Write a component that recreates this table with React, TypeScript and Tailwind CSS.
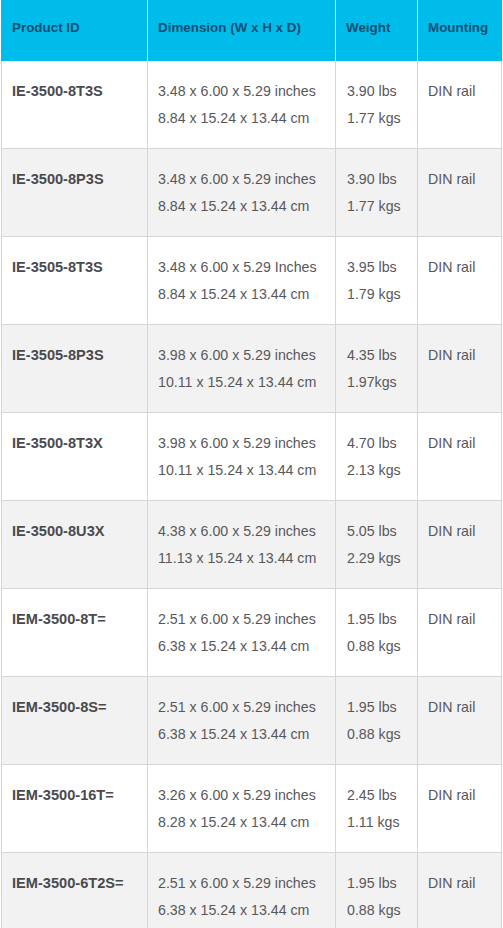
const rows = [
  { id: 'IE-3500-8T3S', dim: ['3.48 x 6.00 x 5.29 inches', '8.84 x 15.24 x 13.44 cm'], weight: ['3.90 lbs', '1.77 kgs'] },
  { id: 'IE-3500-8P3S', dim: ['3.48 x 6.00 x 5.29 inches', '8.84 x 15.24 x 13.44 cm'], weight: ['3.90 lbs', '1.77 kgs'] },
  { id: 'IE-3505-8T3S', dim: ['3.48 x 6.00 x 5.29 Inches', '8.84 x 15.24 x 13.44 cm'], weight: ['3.95 lbs', '1.79 kgs'] },
  { id: 'IE-3505-8P3S', dim: ['3.98 x 6.00 x 5.29 inches', '10.11 x 15.24 x 13.44 cm'], weight: ['4.35 lbs', '1.97kgs'] },
  { id: 'IE-3500-8T3X', dim: ['3.98 x 6.00 x 5.29 inches', '10.11 x 15.24 x 13.44 cm'], weight: ['4.70 lbs', '2.13 kgs'] },
  { id: 'IE-3500-8U3X', dim: ['4.38 x 6.00 x 5.29 inches', '11.13 x 15.24 x 13.44 cm'], weight: ['5.05 lbs', '2.29 kgs'] },
  { id: 'IEM-3500-8T=', dim: ['2.51 x 6.00 x 5.29 inches', '6.38 x 15.24 x 13.44 cm'], weight: ['1.95 lbs', '0.88 kgs'] },
  { id: 'IEM-3500-8S=', dim: ['2.51 x 6.00 x 5.29 inches', '6.38 x 15.24 x 13.44 cm'], weight: ['1.95 lbs', '0.88 kgs'] },
  { id: 'IEM-3500-16T=', dim: ['3.26 x 6.00 x 5.29 inches', '8.28 x 15.24 x 13.44 cm'], weight: ['2.45 lbs', '1.11 kgs'] },
  { id: 'IEM-3500-6T2S=', dim: ['2.51 x 6.00 x 5.29 inches', '6.38 x 15.24 x 13.44 cm'], weight: ['1.95 lbs', '0.88 kgs'] },
]

const headers = ['Product ID', 'Dimension (W x H x D)', 'Weight', 'Mounting']

export default function App() {
  return (
    <div className="min-h-screen bg-white font-['Liberation_Sans',Arial,sans-serif]">
      <div className="ml-[1px] w-[501px]">
        {/* 헤더 */}
        <div className="grid grid-cols-[146px_188px_82px_85px] h-[61px] bg-[#00bceb]">
          {headers.map((h, i) => (
            <div
              key={h}
              className={`pl-[10px] pt-[19px] text-[13.4px] leading-[18px] font-bold text-[#0d4f72] ${i > 0 ? 'border-l border-white' : 'pl-[11px]'}`}
            >
              {h}
            </div>
          ))}
        </div>

        {/* 본문 행 */}
        {rows.map((r, idx) => (
          <div
            key={r.id}
            className={`grid grid-cols-[145px_188px_82px_85px] h-[88px] border-l border-b border-[#d6d6d6] text-[14.2px] leading-[27px] text-[#58585b] ${idx % 2 === 1 ? 'bg-[#f2f2f2]' : 'bg-white'}`}
          >
            <div className="px-[10px] pt-[17px] text-[14.6px] font-bold text-[#4a4a4d]">{r.id}</div>
            <div className="border-l border-[#d6d6d6] px-[10px] pt-[17px]">
              <div>{r.dim[0]}</div>
              <div>{r.dim[1]}</div>
            </div>
            <div className="border-l border-[#d6d6d6] px-[11px] pt-[17px]">
              <div>{r.weight[0]}</div>
              <div>{r.weight[1]}</div>
            </div>
            <div className="border-l border-r border-[#d6d6d6] px-[10px] pt-[17px]">DIN rail</div>
          </div>
        ))}
      </div>
    </div>
  )
}
